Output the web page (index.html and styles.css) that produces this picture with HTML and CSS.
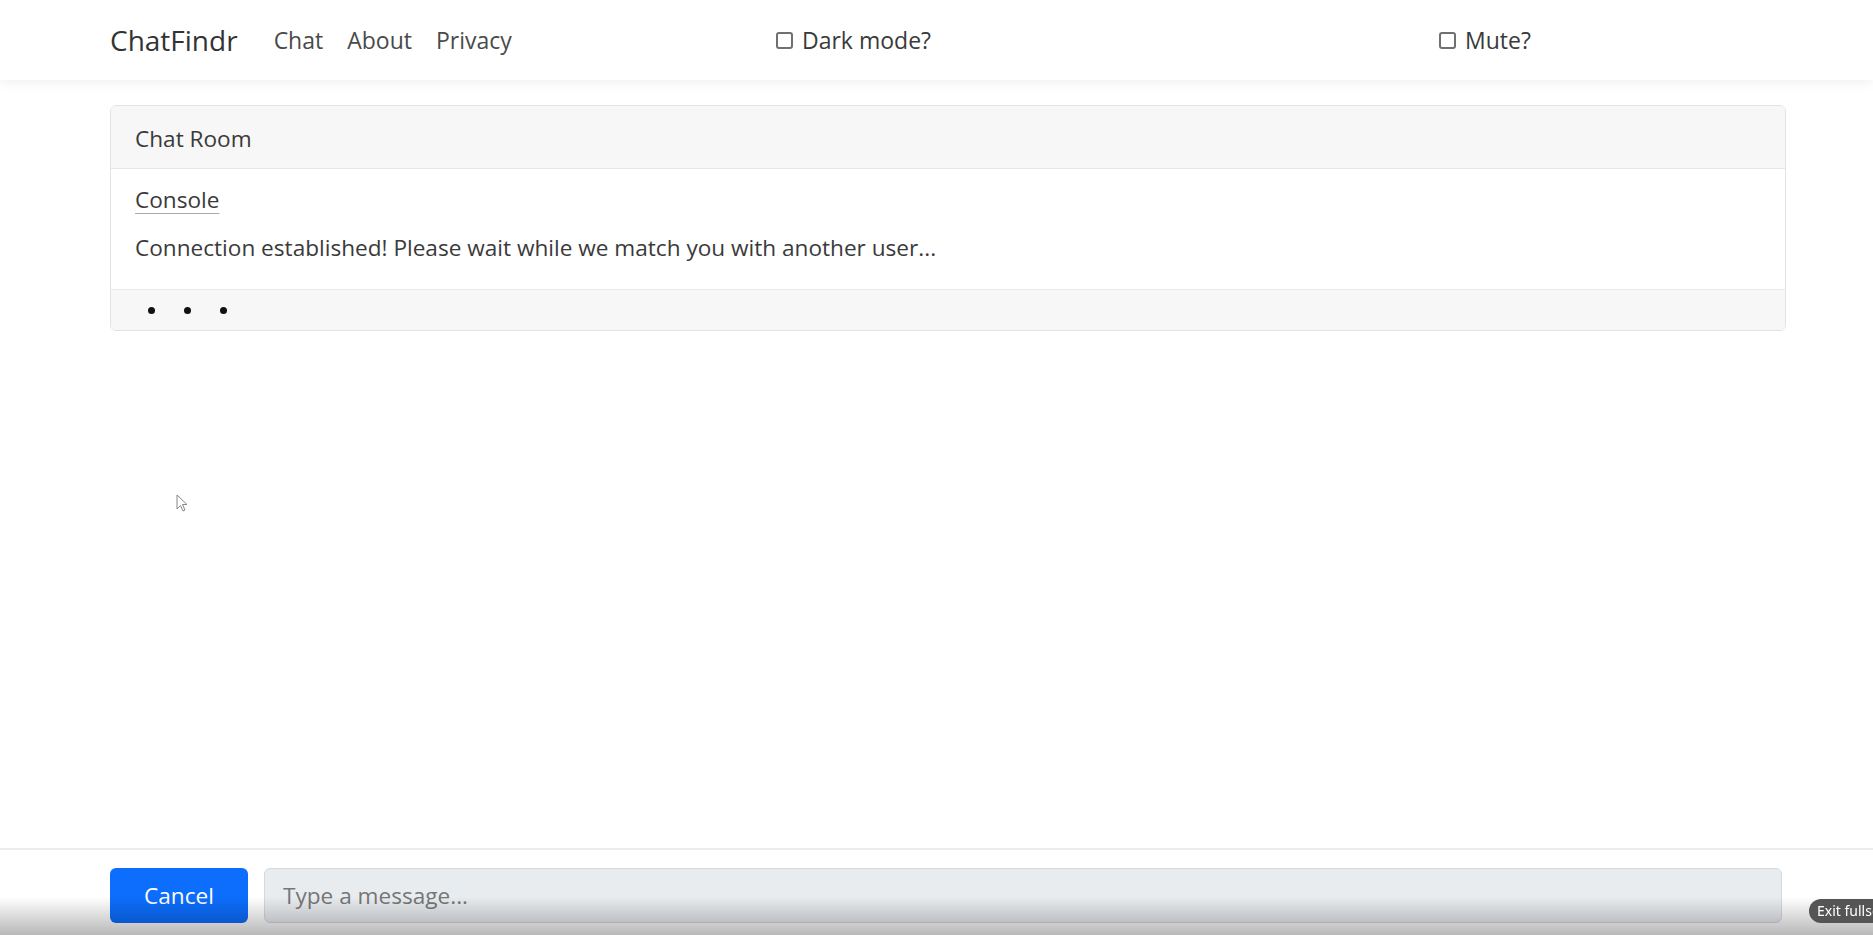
FILE: index.html
```html
<!DOCTYPE html>
<html lang="en">
  <head>
    <meta charset="UTF-8" />
    <meta name="viewport" content="width=device-width, initial-scale=1.0" />
    <title>ChatFindr</title>
    <link rel="stylesheet" href="styles.css">
  </head>
  <body>
    <nav class="navbar">
      <div class="nav-left">
        <a class="brand" href="#">ChatFindr</a>
        <a class="nav-link" href="#">Chat</a>
        <a class="nav-link" href="#">About</a>
        <a class="nav-link" href="#">Privacy</a>
      </div>
      <label class="toggle"><span class="box"></span>Dark mode?</label>
      <label class="toggle"><span class="box"></span>Mute?</label>
    </nav>

    <main class="main">
      <div class="card">
        <div class="card-header">Chat Room</div>
        <div class="card-body">
          <div class="console-title">Console</div>
          <p class="console-msg">Connection established! Please wait while we match you with another user...</p>
        </div>
        <div class="card-footer">
          <span class="dot"></span>
          <span class="dot"></span>
          <span class="dot"></span>
        </div>
      </div>
    </main>

    <footer class="composer">
      <button class="btn" type="button">Cancel</button>
      <input class="msg-input" type="text" placeholder="Type a message..." disabled />
    </footer>

    <!-- screen overlays from the capture -->
    <svg class="cursor" width="14" height="20" viewBox="0 0 14 20">
      <path d="M1 1 L1 15 L4.5 11.5 L7 17 L9 16 L6.5 10.5 L11 10.5 Z" fill="#fff" stroke="#888" stroke-width="1" />
    </svg>
    <div class="shade"></div>
    <div class="exit-pill">Exit fullscreen</div>
  </body>
</html>
```

FILE: styles.css
```css
* {
  box-sizing: border-box;
}

body {
  margin: 0;
  min-height: 100vh;
  display: flex;
  flex-direction: column;
  font-family: "Open Sans", "Noto Sans", sans-serif;
  color: #3a3a3a;
  background: #fff;
  overflow: hidden;
}

a {
  text-decoration: none;
  color: inherit;
}

/* navbar */
.navbar {
  height: 80px;
  padding-left: 110px;
  display: grid;
  grid-template-columns: 666px 663px auto;
  align-items: center;
  box-shadow: 0 2px 12px rgba(0, 0, 0, 0.07);
  position: relative;
  z-index: 1;
}

.nav-left {
  display: flex;
  align-items: center;
}

.brand {
  font-size: 28px;
  color: #333;
  margin-right: 36px;
}

.nav-link {
  font-size: 23px;
  color: #4a4a4a;
  margin-right: 24px;
}

.toggle {
  display: flex;
  align-items: center;
  font-size: 23px;
  color: #3a3a3a;
}

.box {
  width: 17px;
  height: 17px;
  border: 2px solid #707070;
  border-radius: 3px;
  margin-right: 9px;
  background: #fff;
}

/* card */
.main {
  flex: 1;
  padding: 25px 87px 0 110px;
}

.card {
  border: 1px solid #e3e3e3;
  border-radius: 6px;
  overflow: hidden;
}

.card-header {
  height: 63px;
  padding: 2px 24px 0;
  display: flex;
  align-items: center;
  background: #f7f7f7;
  border-bottom: 1px solid #e6e6e6;
  font-size: 22.6px;
  color: #3a3a3a;
}

.card-body {
  padding: 15px 24px 25px;
}

.console-title {
  font-size: 22.6px;
  text-decoration: underline;
  text-decoration-color: #aaa;
  text-decoration-thickness: 1px;
  text-underline-offset: 5px;
  line-height: 32px;
}

.console-msg {
  margin: 16px 0 0;
  font-size: 22.6px;
  line-height: 32px;
}

.card-footer {
  height: 41px;
  padding-left: 37px;
  display: flex;
  align-items: center;
  gap: 29px;
  background: #f7f7f7;
  border-top: 1px solid #e8e8e8;
}

.dot {
  width: 7px;
  height: 7px;
  border-radius: 50%;
  background: #111;
}

/* message bar */
.composer {
  height: 87px;
  border-top: 2px solid #ececec;
  padding: 18px 91px 0 110px;
  display: flex;
  align-items: flex-start;
  gap: 16px;
}

.btn {
  width: 138px;
  height: 55px;
  border: none;
  border-radius: 6px;
  background: #0d6efd;
  color: #fff;
  font-family: inherit;
  font-size: 22.6px;
}

.msg-input {
  flex: 1;
  height: 55px;
  border: 1px solid #d6d9dc;
  border-radius: 6px;
  background: #e9ecef;
  padding: 0 18px;
  font-family: inherit;
  font-size: 22.6px;
}

.msg-input::placeholder {
  color: #777;
}

/* capture overlays */
.cursor {
  position: absolute;
  left: 176px;
  top: 494px;
}

.shade {
  position: fixed;
  left: 0;
  right: 0;
  bottom: 0;
  height: 38px;
  background: linear-gradient(rgba(0, 0, 0, 0), rgba(0, 0, 0, 0.28));
  pointer-events: none;
}

.exit-pill {
  position: fixed;
  left: 1809px;
  bottom: 12px;
  height: 24px;
  padding: 0 8px;
  border-radius: 12px;
  background: #555;
  color: #fff;
  font-family: "Noto Sans", sans-serif;
  font-size: 14px;
  line-height: 24px;
  white-space: nowrap;
}
```
